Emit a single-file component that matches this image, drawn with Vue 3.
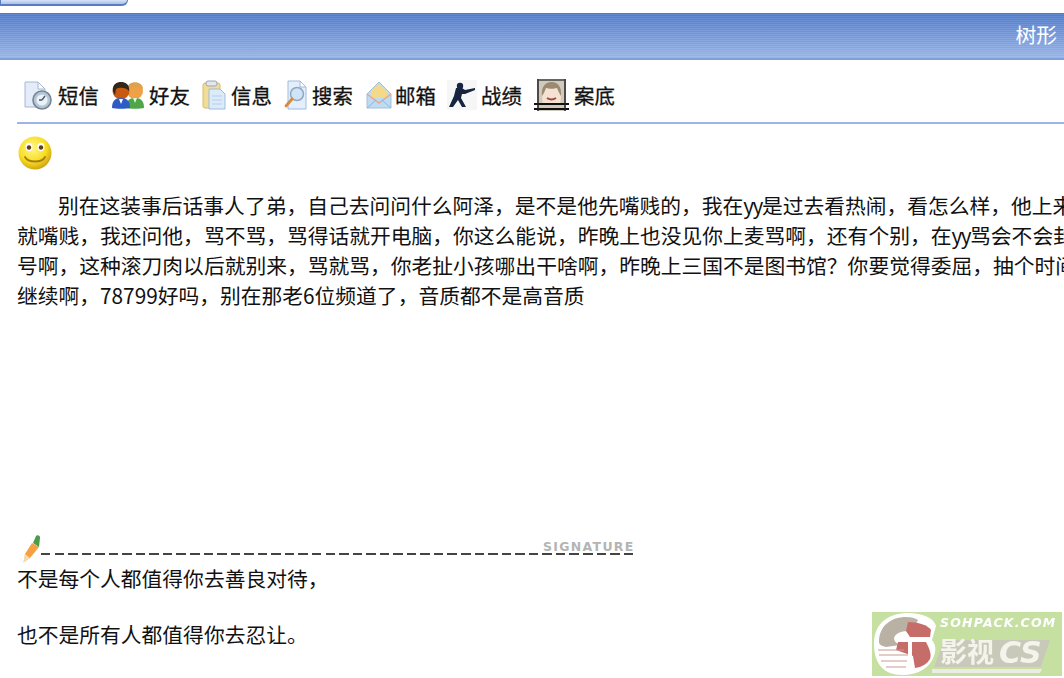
<script setup>
</script>

<template>
  <main class="page">
    <div class="tab"></div>
    <header class="bar"><span>树形</span></header>

    <div class="content">
      <nav class="tools">
        <a class="tool t1">
          <svg width="30" height="30" viewBox="0 0 30 30">
            <path d="M2 2h13l7 7v18H2z" fill="#e3ecf8" stroke="#a5b8d4" />
            <path d="M15 2v7h7z" fill="#fff" stroke="#a5b8d4" />
            <circle cx="19" cy="20" r="9" fill="#b4c6d8" stroke="#76858f" stroke-width="1.6" />
            <circle cx="19" cy="20" r="5.600" fill="#eaf1f7" />
            <path d="M19 20l3-4M19 20h-3" stroke="#4c5a66" stroke-width="1.400" />
          </svg>
          短信
        </a>
        <a class="tool t2">
          <svg width="34" height="30" viewBox="0 0 34 30">
            <circle cx="24" cy="11" r="8" fill="#efa245" />
            <path d="M16 9c0-9 16-9 16 0-3-3-12-3-16 0z" fill="#dca24e" />
            <path d="M15 28c0-7 3-10 9-10s9 3 9 10c-3 1-15 1-18 0z" fill="#4fa548" />
            <path d="M22 18l2 5 2-5z" fill="#e8f4e0" />
            <circle cx="10" cy="11" r="8.500" fill="#c9590f" />
            <path d="M2 11C1 4 6 2 10 2s9 2 8 9c-3-4-10-4-13-2l-1 6z" fill="#33271d" />
            <path d="M1 28c0-7 3-10 9-10s9 3 9 10c-3 1-15 1-18 0z" fill="#2e5cc4" />
            <path d="M8 19l2 5 2-5z" fill="#fff" />
          </svg>
          好友
        </a>
        <a class="tool t3">
          <svg width="24" height="30" viewBox="0 0 24 30">
            <rect x="1" y="3" width="17" height="25" rx="2" fill="#f3dc95" stroke="#d9bc66" />
            <rect x="4" y="1" width="11" height="5" rx="2" fill="#e2e7ee" stroke="#9aa6b4" />
            <path d="M7 9h11l5 5v15H7z" fill="#dcebfa" stroke="#9dbbe0" />
            <path d="M10 16h10M10 20h10M10 24h10" stroke="#b4cfeb" />
          </svg>
          信息
        </a>
        <a class="tool t4">
          <svg width="24" height="30" viewBox="0 0 24 30">
            <path d="M4 1h12l6 6v22H4z" fill="#e4effb" stroke="#9dbbe0" />
            <path d="M16 1v6h6z" fill="#fff" stroke="#9dbbe0" />
            <circle cx="13" cy="14" r="6.500" fill="#cfe4f7" stroke="#8fa8c2" stroke-width="1.500" />
            <path d="M8 19l-6 7" stroke="#d98a3c" stroke-width="2.800" stroke-linecap="round" />
          </svg>
          搜索
        </a>
        <a class="tool t5">
          <svg width="26" height="28" viewBox="0 0 26 28">
            <path d="M1 13L13 1l12 12v14H1z" fill="#bcdcf4" stroke="#a5bfd8" />
            <path d="M5 10l8-7 8 7v7H5z" fill="#f5d98a" />
            <path d="M1 13l12 9 12-9" fill="none" stroke="#eda58c" stroke-width="1.400" />
            <path d="M1 27l9-8M25 27l-9-8" stroke="#8fb6d8" />
          </svg>
          邮箱
        </a>
        <a class="tool t6">
          <svg width="30" height="30" viewBox="0 0 30 30">
            <rect width="30" height="30" fill="#f6f6f6" />
            <circle cx="13" cy="6" r="3.200" fill="#16243f" />
            <path d="M9 8l6 0 3 2 10-2 0 2-10 4-3 0-1 4 5 9h-4l-4-7-5 7H2l5-11z" fill="#16243f" />
          </svg>
          战绩
        </a>
        <a class="tool t7">
          <svg width="35" height="32" viewBox="0 0 35 32">
            <rect x="3" width="29" height="32" fill="#cfcabb" />
            <path d="M9 25c-2-8-1-21 8.500-21s10.500 13 8.500 21z" fill="#f5e2d2" />
            <path d="M8 17C7 7 12 3 17.500 3S28 7 27 17c-2-3-3-6-4-8-3 1-8 1-11 0-1 3-2 5-4 8z" fill="#9a8a72" />
            <path d="M13 19c3 2 6 2 9 0" stroke="#9c4a3f" stroke-width="2" fill="none" />
            <path d="M0 25h35M0 30h35" stroke="#111" stroke-width="2" />
            <path d="M4 0v32M31 0v32" stroke="#222" stroke-width="1.500" />
            <path d="M3 1h29" stroke="#444" stroke-width="1.500" />
          </svg>
          案底
        </a>
      </nav>

      <svg class="smiley" width="36" height="36" viewBox="0 0 36 36">
        <defs>
          <radialGradient id="face" cx="0.42" cy="0.35" r="0.7">
            <stop offset="0" stop-color="#fff68a" />
            <stop offset="0.6" stop-color="#f8de22" />
            <stop offset="1" stop-color="#c89a10" />
          </radialGradient>
        </defs>
        <circle cx="18" cy="18" r="16.500" fill="url(#face)" />
        <ellipse cx="12" cy="12" rx="3.400" ry="4.200" fill="#fff" />
        <ellipse cx="24" cy="12" rx="3.400" ry="4.200" fill="#fff" />
        <circle cx="12" cy="12.500" r="2.200" fill="#6a3a12" />
        <circle cx="24" cy="12.500" r="2.200" fill="#6a3a12" />
        <path d="M8 22c3 6 17 6 20 0" fill="none" stroke="#a87c10" stroke-width="1.800" stroke-linecap="round" />
      </svg>

      <div class="post">
        <p class="first">别在这装事后话事人了弟，自己去问问什么阿泽，是不是他先嘴贱的，我在<span class="yy">yy</span>是过去看热闹，看怎么样，他上来</p>
        <p>就嘴贱，我还问他，骂不骂，骂得话就开电脑，你这么能说，昨晚上也没见你上麦骂啊，还有个别，在<span class="yy">yy</span>骂会不会封</p>
        <p>号啊，这种滚刀肉以后就别来，骂就骂，你老扯小孩哪出干啥啊，昨晚上三国不是图书馆？你要觉得委屈，抽个时间</p>
        <p>继续啊，78799好吗，别在那老6位频道了，音质都不是高音质</p>
      </div>

      <div class="sign">
        <svg class="pencil" width="20" height="30" viewBox="0 0 20 30">
          <path d="M11 9l7 4-9 11-6 4 1-8z" fill="#f4a043" />
          <path d="M12 9l3-7c1-2 5 0 4 2l-1 9z" fill="#4c9d47" />
          <path d="M4 20l-2 9 7-5z" fill="#f7d9b0" />
        </svg>
        <div class="dashes"><span>SIGNATURE</span></div>
      </div>

      <p class="sig-text">不是每个人都值得你去善良对待，</p>
      <p class="sig-text second">也不是所有人都值得你去忍让。</p>
    </div>

    <svg class="logo" width="190" height="64" viewBox="0 0 190 64">
      <rect width="190" height="64" fill="#c6e0a2" />
      <path d="M2 32C2 10 18 1 36 1c14 0 26 5 28 13l-4 14c4 5 4 10 2 16-4 12-16 19-32 19C12 63 2 52 2 32z" fill="#fff" />
      <path d="M7 30C7 13 20 5 34 5c5 0 9 1 12 3L40 20c-8-2-16 0-18 6 0 3 2 5 6 7l-14 2C9 34 7 32 7 30z" fill="#b9b2a4" />
      <path d="M36 10c10 0 20 3 23 8l-1 7H38l-4-6z" fill="#c76d69" />
      <path d="M26 30h28c3 6 6 12 4 17-3 5-8 8-15 9l-2-12-17-6z" fill="#c76d69" />
      <path d="M6 38h26M7 43h30M9 49h26M14 55h20" stroke="#c79b92" />
      <rect x="36" y="28" width="4" height="18" fill="#fff" />
      <text x="68" y="15" class="logo-en">SOHPACK.COM</text>
      <path d="M72 28h106l-9 27H62z" fill="#c9c9ba" />
      <path d="M60 57h110l-2 4H60z" fill="#ecece4" />
      <text x="68" y="50" class="logo-cn">影视</text>
      <text x="127" y="51" class="logo-cs">CS</text>
    </svg>
  </main>
</template>

<style scoped>
.page {
  position: relative;
  width: 1064px;
  height: 678px;
  overflow: hidden;
  background: #fff;
  font-family: "Noto Sans CJK SC", "Noto Sans", sans-serif;
  font-size: 20.77px;
  color: #111;
}
p {
  margin: 0;
  white-space: nowrap;
}
.yy {
  letter-spacing: -1.500px;
}
.tab {
  width: 128px;
  height: 6px;
  box-sizing: border-box;
  background: linear-gradient(#d7e3f6, #a9c0ea);
  border: 1px solid #5a7cc4;
  border-top: 0;
  border-bottom-width: 2px;
  border-radius: 0 0 6px 0;
}
.bar {
  margin-top: 7px;
  height: 47px;
  box-sizing: border-box;
  border-bottom: 2px solid #7f9fdc;
  background: repeating-linear-gradient(#0000 0 1px, #ffffff1a 1px 2px), linear-gradient(#4f7acb, #98b4e8);
  display: flex;
  align-items: center;
  justify-content: flex-end;
  padding: 0 7px 3px 0;
  color: #fff;
}
.content {
  padding-left: 17px;
}
.tools {
  height: 64px;
  box-sizing: border-box;
  border-bottom: 2px solid #9db4e6;
  display: flex;
  align-items: center;
  padding-left: 6px;
  padding-top: 7px;
  font-size: 20.4px;
}
.tools svg {
  filter: blur(0.4px);
}
.tool {
  display: flex;
  align-items: center;
  gap: 5px;
  flex: none;
  -webkit-text-stroke: 0.3px #111;
}
.t1 { width: 88px; }
.t2 { width: 91px; gap: 4px; }
.t3 { width: 82px; gap: 5px; }
.t4 { width: 82px; gap: 4px; }
.t5 { width: 81px; gap: 3px; }
.t6 { width: 87px; gap: 4px; }
.t7 { gap: 5px; }
.smiley {
  display: block;
  margin-top: 11px;
  filter: blur(0.3px);
}
.post {
  margin-top: 19px;
  line-height: 30px;
}
.post .first {
  text-indent: 41px;
}
.sign {
  margin-top: 224px;
  display: flex;
  align-items: flex-end;
  padding-left: 4px;
}
.pencil {
  margin-bottom: -3px;
}
.dashes {
  position: relative;
  width: 596px;
  height: 2px;
  margin-bottom: 6px;
  background: repeating-linear-gradient(90deg, #444 0 9.500px, #0000 9.500px 13.550px);
}
.dashes span {
  position: absolute;
  left: 502px;
  top: -14px;
  font: bold 12.500px "DejaVu Sans", sans-serif;
  letter-spacing: 1.300px;
  color: #b4b4b4;
}
.sig-text {
  line-height: 28px;
  margin-top: 3px;
}
.second {
  margin-top: 28px;
}
.logo {
  position: absolute;
  left: 872px;
  top: 612px;
  filter: blur(0.4px);
}
.logo-en {
  font: italic bold 12.500px "DejaVu Sans", sans-serif;
  fill: #fff;
  letter-spacing: 1.200px;
}
.logo-cn {
  font: bold 27px "Noto Sans CJK SC", sans-serif;
  fill: #f4f4ec;
}
.logo-cs {
  font: italic bold 30px "DejaVu Sans", sans-serif;
  fill: #f4f4ec;
}
</style>
